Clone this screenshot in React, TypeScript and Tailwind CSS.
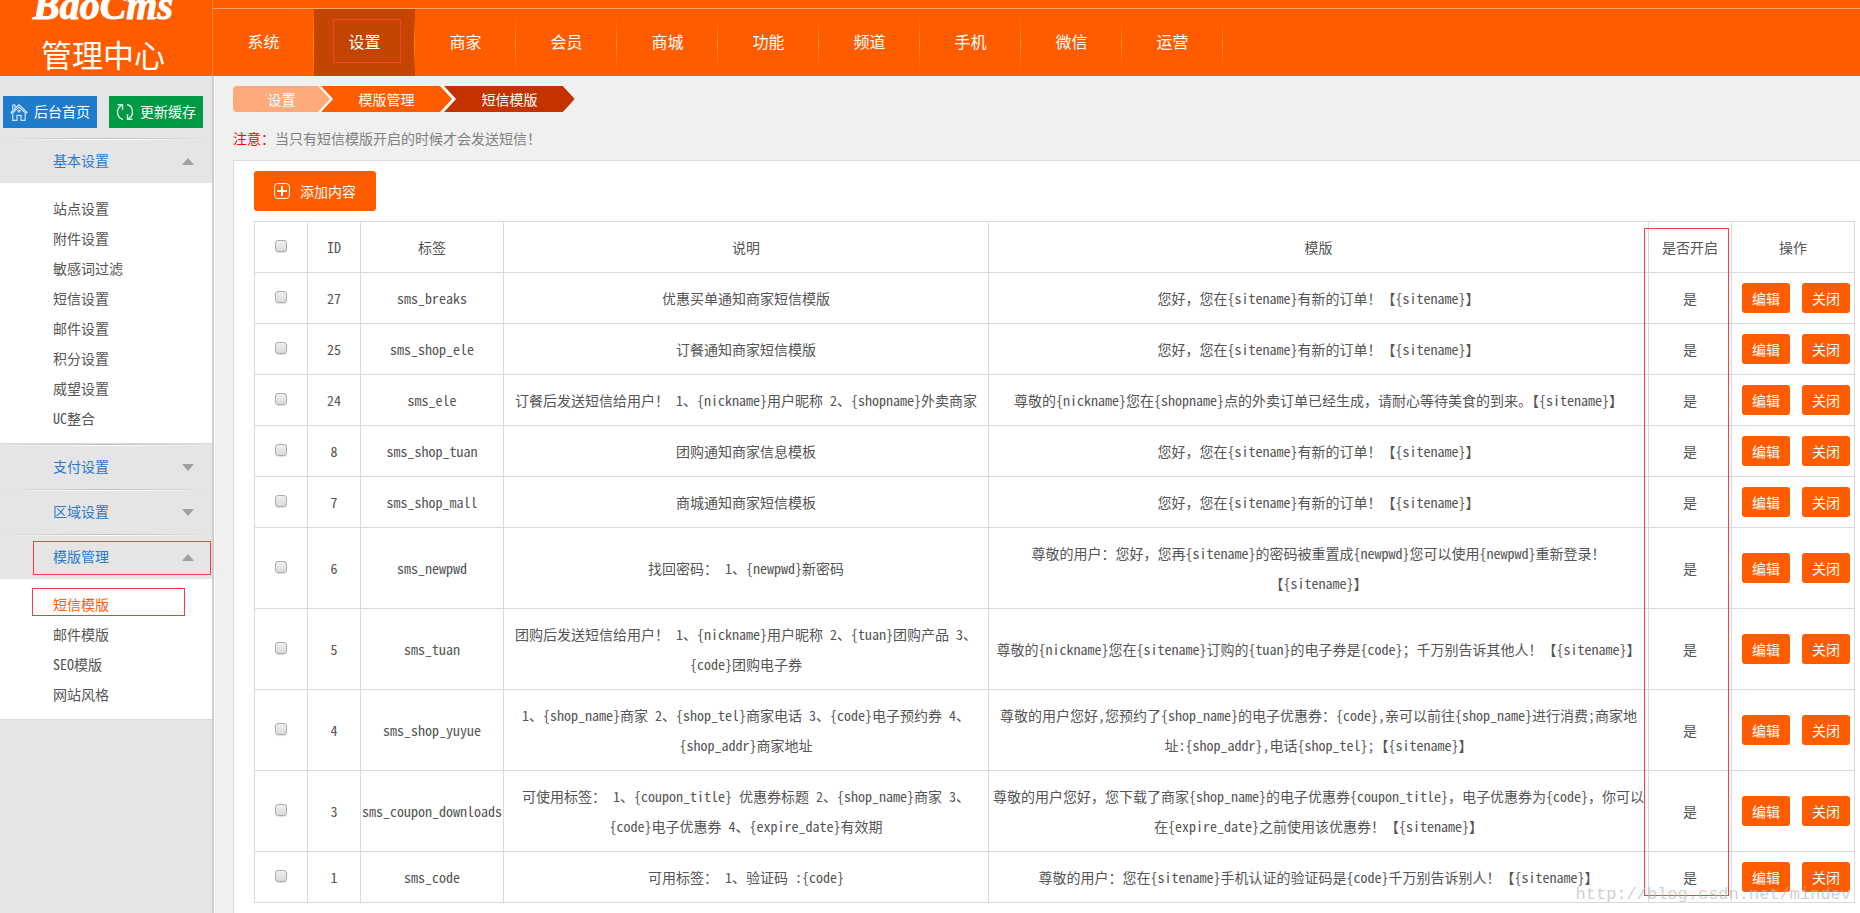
import React from "react";

type Group = { title: string; items?: string[] };
type Row = { id: number; tag: string; desc: string; tpl: string };

const NAV = ["系统", "设置", "商家", "会员", "商城", "功能", "频道", "手机", "微信", "运营"];

const GROUPS: Group[] = [
  {
    title: "基本设置",
    items: ["站点设置", "附件设置", "敏感词过滤", "短信设置", "邮件设置", "积分设置", "威望设置", "UC整合"],
  },
  { title: "支付设置" },
  { title: "区域设置" },
  { title: "模版管理", items: ["短信模版", "邮件模版", "SEO模版", "网站风格"] },
];

const ORDER = "您好，您在{sitename}有新的订单！【{sitename}】";

const ROWS: Row[] = [
  { id: 27, tag: "sms_breaks", desc: "优惠买单通知商家短信模版", tpl: ORDER },
  { id: 25, tag: "sms_shop_ele", desc: "订餐通知商家短信模版", tpl: ORDER },
  {
    id: 24,
    tag: "sms_ele",
    desc: "订餐后发送短信给用户！ 1、{nickname}用户昵称 2、{shopname}外卖商家",
    tpl: "尊敬的{nickname}您在{shopname}点的外卖订单已经生成，请耐心等待美食的到来。【{sitename}】",
  },
  { id: 8, tag: "sms_shop_tuan", desc: "团购通知商家信息模板", tpl: ORDER },
  { id: 7, tag: "sms_shop_mall", desc: "商城通知商家短信模板", tpl: ORDER },
  {
    id: 6,
    tag: "sms_newpwd",
    desc: "找回密码： 1、{newpwd}新密码",
    tpl: "尊敬的用户：您好，您再{sitename}的密码被重置成{newpwd}您可以使用{newpwd}重新登录！\n【{sitename}】",
  },
  {
    id: 5,
    tag: "sms_tuan",
    desc: "团购后发送短信给用户！ 1、{nickname}用户昵称 2、{tuan}团购产品 3、\n{code}团购电子券",
    tpl: "尊敬的{nickname}您在{sitename}订购的{tuan}的电子券是{code}；千万别告诉其他人！【{sitename}】",
  },
  {
    id: 4,
    tag: "sms_shop_yuyue",
    desc: "1、{shop_name}商家 2、{shop_tel}商家电话 3、{code}电子预约券 4、\n{shop_addr}商家地址",
    tpl: "尊敬的用户您好,您预约了{shop_name}的电子优惠券：{code},亲可以前往{shop_name}进行消费;商家地\n址:{shop_addr},电话{shop_tel};【{sitename}】",
  },
  {
    id: 3,
    tag: "sms_coupon_downloads",
    desc: "可使用标签： 1、{coupon_title} 优惠券标题 2、{shop_name}商家 3、\n{code}电子优惠券 4、{expire_date}有效期",
    tpl: "尊敬的用户您好，您下载了商家{shop_name}的电子优惠券{coupon_title}，电子优惠券为{code}，你可以\n在{expire_date}之前使用该优惠券！【{sitename}】",
  },
  {
    id: 1,
    tag: "sms_code",
    desc: "可用标签： 1、验证码 :{code}",
    tpl: "尊敬的用户：您在{sitename}手机认证的验证码是{code}千万别告诉别人！【{sitename}】",
  },
];

function Outline({ place }: { place: string }) {
  return <span aria-hidden="true" className={`pointer-events-none absolute z-10 border border-[#ff3b3b] ${place}`} />;
}

function HomeIcon() {
  return (
    <svg viewBox="0 0 18 18" className="size-[18px]" fill="none" stroke="#cfe4f6" strokeWidth="1.2">
      <path d="M1 9.5 9 1.5l8 8-1.2 1L9 4 2.200 10.500z" />
      <path d="M2.800 6.500V2H5v2.500M2.800 11v6.300h4.200v-5h4v5h4.200V11" />
      <circle cx="9" cy="8" r="1" />
    </svg>
  );
}

function RefreshIcon() {
  return (
    <svg viewBox="0 0 18 18" className="size-[18px]" fill="none" stroke="#d9f2e3" strokeWidth="1.4">
      <path d="M7 16.500A7.600 7.600 0 0 1 5.500 2.500M11 1.500a7.600 7.600 0 0 1 1.500 14" />
      <path d="M1.500 1.800h5v5M16.500 16.200h-5v-5" />
    </svg>
  );
}

function Check({ label }: { label: string }) {
  return (
    <input
      type="checkbox"
      aria-label={label}
      className="mb-[6px] inline-block size-3 appearance-none rounded-[3px] border border-[#adadad] bg-linear-to-b from-[#efefef] to-[#dadada] align-middle shadow-[0_1px_1px_#e3e3e3]"
    />
  );
}

function Header() {
  return (
    <header className="flex h-[76px] bg-[#ff5c00] text-white">
      <div className="flex w-[213px] shrink-0 flex-col items-center justify-end overflow-hidden border-r border-[#ff9000] pr-[6px]">
        <div className="mb-2 font-['Liberation_Serif',serif] text-[40px] leading-10 font-bold italic [-webkit-text-stroke:1px_white]">
          BaoCms
        </div>
        <div className="pb-[2px] text-[31px] leading-10 font-normal">管理中心</div>
      </div>
      <nav className="flex-1 pt-2">
        <ul className="flex border-t border-[#ffa56e]">
          {NAV.map((n) => (
            <li
              key={n}
              className={n === "设置" ? "relative w-[101px] bg-[#c44500]" : "relative w-[101px]"}
            >
              <a href="#" className="flex h-[67px] items-center justify-center pb-1 text-base">
                {n}
              </a>
              <span className="absolute top-2 right-0 h-[54px] w-px bg-linear-to-b from-transparent via-[#ff9400] to-transparent" />
              {n === "设置" && <Outline place="top-[10px] left-[19px] h-11 w-[68px]" />}
            </li>
          ))}
        </ul>
      </nav>
    </header>
  );
}

function Sidebar() {
  return (
    <aside className="w-[214px] shrink-0 border-r-2 border-[#cfcfcf] bg-[#e5e5e5]">
      <div className="flex h-[62px] gap-3 pt-5 pl-[3px]">
        <button type="button" className="flex h-8 w-[94px] items-center justify-center gap-[6px] bg-[#1f7bcb] text-white">
          <HomeIcon />
          <span className="pb-[2px]">后台首页</span>
        </button>
        <button type="button" className="flex h-8 w-[94px] items-center justify-center gap-[6px] bg-[#009a44] text-white">
          <RefreshIcon />
          <span className="pb-[2px]">更新缓存</span>
        </button>
      </div>
      {GROUPS.map((g) => (
        <section key={g.title} className="relative">
          <div className="h-px bg-linear-to-r from-transparent via-[#bdbdbd] to-transparent" />
          <div className="h-px bg-linear-to-r from-transparent via-white to-transparent" />
          <h2 className="flex h-[43px] items-center justify-between pr-[18px] pl-[53px] text-[#2b7acd]">
            <span className="pb-1">{g.title}</span>
            <svg viewBox="0 0 12 7" className="h-[7px] w-3" fill="#a0a0a0">
              <path d={g.items ? "M6 0l6 7H0z" : "M0 0h12L6 7z"} />
            </svg>
          </h2>
          {g.items && (
            <ul className="border-b border-[#dadada] bg-white py-[10px]">
              {g.items.map((it) => (
                <li key={it} className="h-[30px] pl-[53px] leading-[30px]">
                  <a href="#" className={it === "短信模版" ? "text-[#ff5c00]" : ""}>
                    {it}
                  </a>
                </li>
              ))}
            </ul>
          )}
          {g.title === "模版管理" && (
            <>
              <Outline place="top-[7px] left-[33px] h-[34px] w-[178px]" />
              <Outline place="top-[54px] left-8 h-7 w-[153px]" />
            </>
          )}
        </section>
      ))}
    </aside>
  );
}

function Breadcrumb() {
  return (
    <ol className="flex h-[26px] w-[342px] rounded-l bg-white text-center leading-[26px] text-white [clip-path:polygon(0_0,330px_0,342px_13px,330px_100%,0_100%)]">
      <li className="w-[97px] rounded-l bg-[#ffaa7a] [clip-path:polygon(0_0,85px_0,97px_13px,85px_100%,0_100%)]">
        设置
      </li>
      <li className="-ml-[9px] w-[131px] bg-[#ff5c00] [clip-path:polygon(0_0,119px_0,131px_13px,119px_100%,0_100%,12px_13px)]">
        模版管理
      </li>
      <li className="-ml-2 w-[131px] bg-[#c23300] [clip-path:polygon(0_0,119px_0,131px_13px,119px_100%,0_100%,12px_13px)]">
        短信模版
      </li>
    </ol>
  );
}

function Templates() {
  const th = "border border-[#dadada] py-[10px] font-normal";
  const td = "border border-[#dadada] py-[10px]";
  const act = "h-[30px] w-12 rounded-[3px] bg-[#ff5c00] leading-[30px] font-medium text-white";
  return (
    <div className="relative">
      <table className="w-full table-fixed border-collapse text-center leading-[30px] whitespace-pre">
        <colgroup>
          <col className="w-[53px]" />
          <col className="w-[53px]" />
          <col className="w-[143px]" />
          <col className="w-[485px]" />
          <col />
          <col className="w-[83px]" />
          <col className="w-[123px]" />
        </colgroup>
        <thead>
          <tr>
            <th className={th}>
              <Check label="全选" />
            </th>
            <th className={th}>ID</th>
            <th className={th}>标签</th>
            <th className={th}>说明</th>
            <th className={th}>模版</th>
            <th className={th}>是否开启</th>
            <th className={th}>操作</th>
          </tr>
        </thead>
        <tbody>
          {ROWS.map((r) => (
            <tr key={r.id}>
              <td className={td}>
                <Check label={r.tag} />
              </td>
              <td className={td}>{r.id}</td>
              <td className={td}>{r.tag}</td>
              <td className={td}>{r.desc}</td>
              <td className={td}>{r.tpl}</td>
              <td className={td}>是</td>
              <td className={td}>
                <div className="flex justify-end gap-3 pr-1">
                  <button type="button" className={act}>编辑</button>
                  <button type="button" className={act}>关闭</button>
                </div>
              </td>
            </tr>
          ))}
        </tbody>
      </table>
      <Outline place="top-[7px] right-[126px] bottom-[7px] w-[85px]" />
    </div>
  );
}

export default function App() {
  return (
    <div className="relative flex min-h-screen flex-col bg-[#f0f0f0] font-['Noto_Sans_Mono_CJK_SC','Noto_Sans_CJK_SC',sans-serif] text-sm font-light text-[#555]">
      <Header />
      <div className="flex flex-1">
        <Sidebar />
        <main className="flex min-w-0 flex-1 flex-col border-l border-white pt-[10px] pl-[18px]">
          <Breadcrumb />
          <p className="h-12 pt-1 leading-[44px] text-[#808080]">
            <span className="text-[#ff0000]">注意：</span>当只有短信模版开启的时候才会发送短信！
          </p>
          <div className="flex-1 border-t border-l border-[#dadada] bg-white pt-[10px] pr-[5px] pb-[10px] pl-5">
            <button
              type="button"
              className="mb-[10px] flex h-10 w-[122px] items-center justify-center gap-[10px] rounded-[3px] bg-[#ff5c00] text-white"
            >
              <svg viewBox="0 0 16 16" className="size-4" fill="none" stroke="white">
                <rect x=".6" y=".6" width="14.800" height="14.800" rx="3" />
                <path d="M8 3v10M3 8h10" strokeWidth="2" />
              </svg>
              添加内容
            </button>
            <Templates />
          </div>
        </main>
      </div>
      <div className="pointer-events-none absolute right-[9px] bottom-1 z-20 font-['Liberation_Mono',monospace] text-[17px] leading-7 text-[#bbb]/70">
        http://blog.csdn.net/mindev
      </div>
    </div>
  );
}
